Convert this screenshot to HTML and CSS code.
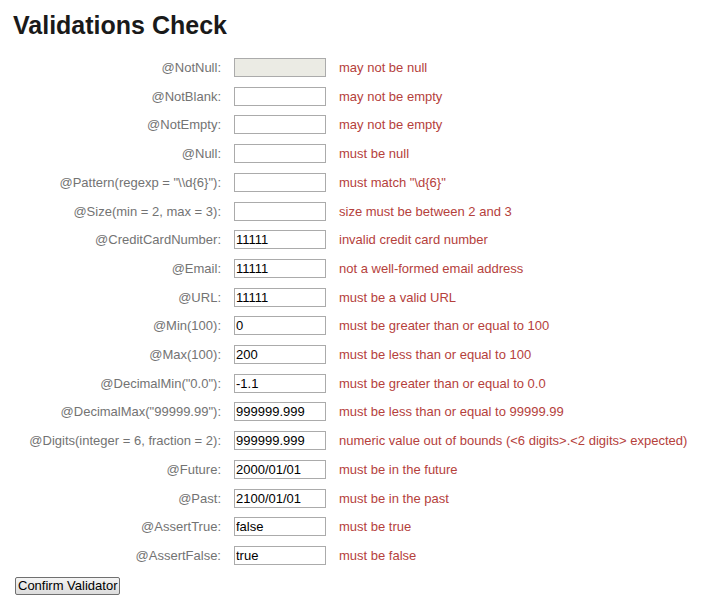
FILE: index.html
```html
<!DOCTYPE html>
<html>
<head>
<meta charset="utf-8">
<title>Validations Check</title>
<link rel="stylesheet" href="styles.css">
</head>
<body>
<h1 class="title">Validations Check</h1>
<form class="form">
  <div class="grid">
    <label class="lbl">@NotNull:</label><input class="inp" type="text" disabled><span class="err">may not be null</span>
    <label class="lbl">@NotBlank:</label><input class="inp" type="text"><span class="err">may not be empty</span>
    <label class="lbl">@NotEmpty:</label><input class="inp" type="text"><span class="err">may not be empty</span>
    <label class="lbl">@Null:</label><input class="inp" type="text"><span class="err">must be null</span>
    <label class="lbl">@Pattern(regexp = "\\d{6}"):</label><input class="inp" type="text"><span class="err">must match "\d{6}"</span>
    <label class="lbl">@Size(min = 2, max = 3):</label><input class="inp" type="text"><span class="err">size must be between 2 and 3</span>
    <label class="lbl">@CreditCardNumber:</label><input class="inp" type="text" value="11111"><span class="err">invalid credit card number</span>
    <label class="lbl">@Email:</label><input class="inp" type="text" value="11111"><span class="err">not a well-formed email address</span>
    <label class="lbl">@URL:</label><input class="inp" type="text" value="11111"><span class="err">must be a valid URL</span>
    <label class="lbl">@Min(100):</label><input class="inp" type="text" value="0"><span class="err">must be greater than or equal to 100</span>
    <label class="lbl">@Max(100):</label><input class="inp" type="text" value="200"><span class="err">must be less than or equal to 100</span>
    <label class="lbl">@DecimalMin("0.0"):</label><input class="inp" type="text" value="-1.1"><span class="err">must be greater than or equal to 0.0</span>
    <label class="lbl">@DecimalMax("99999.99"):</label><input class="inp" type="text" value="999999.999"><span class="err">must be less than or equal to 99999.99</span>
    <label class="lbl">@Digits(integer = 6, fraction = 2):</label><input class="inp" type="text" value="999999.999"><span class="err">numeric value out of bounds (&lt;6 digits&gt;.&lt;2 digits&gt; expected)</span>
    <label class="lbl">@Future:</label><input class="inp" type="text" value="2000/01/01"><span class="err">must be in the future</span>
    <label class="lbl">@Past:</label><input class="inp" type="text" value="2100/01/01"><span class="err">must be in the past</span>
    <label class="lbl">@AssertTrue:</label><input class="inp" type="text" value="false"><span class="err">must be true</span>
    <label class="lbl">@AssertFalse:</label><input class="inp" type="text" value="true"><span class="err">must be false</span>
  </div>
  <button class="btn" type="button">Confirm Validator</button>
</form>
</body>
</html>
```
FILE: styles.css
```css
html, body {
  margin: 0;
  padding: 0;
  background: #ffffff;
}
body {
  font-family: "Liberation Sans", Arial, sans-serif;
  font-size: 13px;
  color: #000;
}
.title {
  margin: 11px 0 0 13px;
  font-size: 25px;
  line-height: 29px;
  font-weight: bold;
  color: #1a1a1a;
}
.form {
  margin: 18px 0 0 0;
}
.grid {
  display: grid;
  grid-template-columns: 221px 104px auto;
  grid-auto-rows: 19px;
  row-gap: 9.706px;
  column-gap: 0;
  align-items: center;
}
.lbl {
  text-align: right;
  color: #737373;
  white-space: nowrap;
}
.inp {
  margin-left: 13px;
  width: 92px;
  height: 19px;
  box-sizing: border-box;
  border: 1px solid #ababab;
  padding: 0 1px;
  font-family: "Liberation Sans", Arial, sans-serif;
  font-size: 13px;
  color: #000;
  background: #fff;
  outline: none;
}
.inp:disabled {
  background: #ebebe4;
}
.err {
  margin-left: 14px;
  color: #b5413c;
  white-space: nowrap;
}
.btn {
  display: block;
  margin: 12px 0 0 15px;
  height: 18px;
  padding: 0 2px;
  font-family: "Liberation Sans", Arial, sans-serif;
  font-size: 13px;
  color: #000;
  background: linear-gradient(#f4f4f4, #dcdcdc);
  border: 1px solid #707070;
  border-radius: 2px;
  line-height: 14px;
}
```
